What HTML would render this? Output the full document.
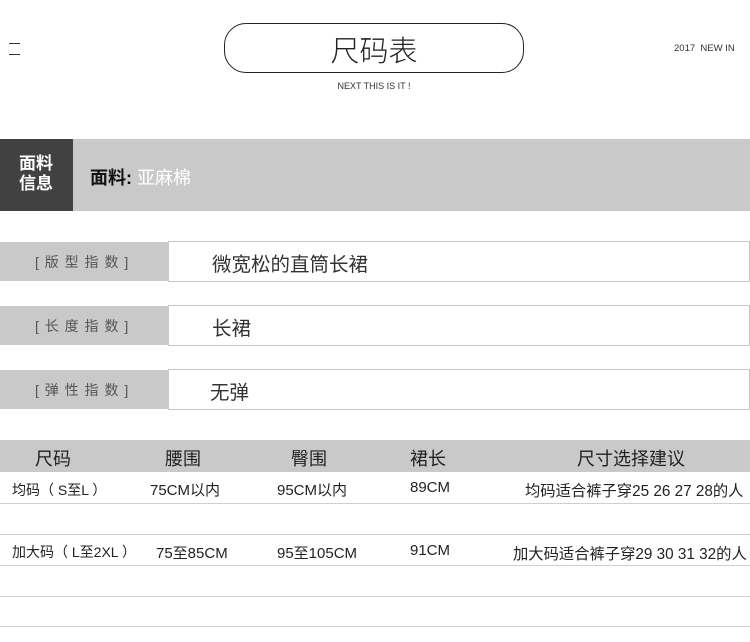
<!DOCTYPE html>
<html><head><meta charset="utf-8"><style>
body{margin:0;width:750px;height:642px;background:#fff;position:relative;overflow:hidden;font-family:"Liberation Sans","Noto Sans CJK SC",sans-serif;color:#222}
.a{position:absolute;white-space:nowrap}
.line{position:absolute;left:0;width:750px;height:1px;background:#cfcfcf}
.lb{position:absolute;left:35px;font-size:14px;color:#555;letter-spacing:1px;white-space:nowrap}
</style></head><body>
<div class="a" style="left:9px;top:43px;width:11px;height:1px;background:#333"></div>
<div class="a" style="left:9px;top:54px;width:11px;height:1px;background:#333"></div>
<div class="a" style="left:224px;top:23px;width:298px;height:48px;border:1.5px solid #222;border-radius:22px"></div>
<div class="a" style="left:224px;top:28px;width:300px;text-align:center;font-size:29px;color:#222;font-weight:300">尺码表</div>
<div class="a" style="left:224px;top:81px;width:300px;text-align:center;font-size:9px;color:#333">NEXT THIS IS IT !</div>
<div class="a" style="left:674px;top:43px;font-size:9.5px;color:#333">2017 &nbsp;NEW IN</div>

<div class="a" style="left:0;top:139px;width:73px;height:72px;background:#414141"></div>
<div class="a" style="left:19px;top:154px;font-size:17px;line-height:20px;color:#fff;font-weight:bold">面料<br>信息</div>
<div class="a" style="left:73px;top:139px;width:677px;height:72px;background:#c8c9c8"></div>
<div class="a" style="left:90px;top:164px;font-size:18px;color:#111;font-weight:bold">面料: <span style="color:#fff;font-weight:normal">亚麻棉</span></div>

<div class="a" style="left:0;top:242px;width:168px;height:39px;background:#c8c9c8"></div>
<div class="a" style="left:168px;top:241px;width:580px;height:39px;border:1px solid #c8c8c8"></div>
<div class="lb" style="top:252px">[ 版 型 指 数 ]</div>
<div class="a" style="left:212px;top:248px;font-size:19.5px;color:#333">微宽松的直筒长裙</div>

<div class="a" style="left:0;top:306px;width:168px;height:39px;background:#c8c9c8"></div>
<div class="a" style="left:168px;top:305px;width:580px;height:39px;border:1px solid #c8c8c8"></div>
<div class="lb" style="top:316px">[ 长 度 指 数 ]</div>
<div class="a" style="left:212px;top:312px;font-size:19.5px;color:#333">长裙</div>

<div class="a" style="left:0;top:370px;width:168px;height:39px;background:#c8c9c8"></div>
<div class="a" style="left:168px;top:369px;width:580px;height:39px;border:1px solid #c8c8c8"></div>
<div class="lb" style="top:380px">[ 弹 性 指 数 ]</div>
<div class="a" style="left:210px;top:376px;font-size:19.5px;color:#333">无弹</div>

<div class="a" style="left:0;top:440px;width:750px;height:32px;background:#c8c9c8"></div>
<div class="a" style="left:35px;top:445px;font-size:18px">尺码</div>
<div class="a" style="left:165px;top:445px;font-size:18px">腰围</div>
<div class="a" style="left:291px;top:445px;font-size:18px">臀围</div>
<div class="a" style="left:410px;top:445px;font-size:18px">裙长</div>
<div class="a" style="left:577px;top:445px;font-size:18px">尺寸选择建议</div>

<div class="a" style="left:12px;top:480px;font-size:14px">均码（ S至L ）</div>
<div class="a" style="left:150px;top:479px;font-size:15px">75CM以内</div>
<div class="a" style="left:277px;top:479px;font-size:15px">95CM以内</div>
<div class="a" style="left:410px;top:479px;font-size:15px">89CM</div>
<div class="a" style="left:525px;top:479px;font-size:15.3px">均码适合裤子穿25 26 27 28的人</div>
<div class="line" style="top:503px"></div>
<div class="line" style="top:534px"></div>
<div class="a" style="left:12px;top:542px;font-size:14px">加大码（ L至2XL ）</div>
<div class="a" style="left:156px;top:542px;font-size:15px">75至85CM</div>
<div class="a" style="left:277px;top:542px;font-size:15px">95至105CM</div>
<div class="a" style="left:410px;top:542px;font-size:15px">91CM</div>
<div class="a" style="left:513px;top:542px;font-size:15.3px">加大码适合裤子穿29 30 31 32的人</div>
<div class="line" style="top:565px"></div>
<div class="line" style="top:596px"></div>
<div class="line" style="top:626px"></div>
</body></html>
